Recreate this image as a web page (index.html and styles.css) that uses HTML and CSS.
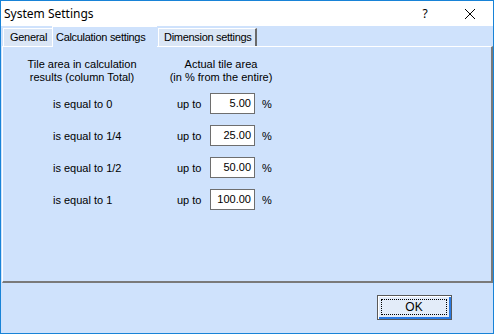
FILE: index.html
```html
<!DOCTYPE html>
<html>
<head>
<meta charset="utf-8">
<link rel="stylesheet" href="styles.css">
</head>
<body>
<div class="window">
  <div class="titlebar">
    <span class="title">System Settings</span>
    <span class="help">?</span>
    <span class="close">
      <svg width="12" height="12" viewBox="0 0 12 12"><path d="M1 1 L11 11 M11 1 L1 11" stroke="#000" stroke-width="1" fill="none"/></svg>
    </span>
  </div>
  <div class="client">
    <div class="tabs">
      <div class="tab tab-general">General</div>
      <div class="tab tab-active">Calculation settings</div>
      <div class="tab tab-dim">Dimension settings</div>
    </div>
    <div class="panel">
      <div class="header">
        <div class="hcol1">Tile area in calculation<br>results (column Total)</div>
        <div class="hcol2">Actual tile area<br>(in % from the entire)</div>
      </div>
      <div class="rows">
        <div class="row"><span class="label">is equal to 0</span><span class="upto">up to</span><span class="input">5.00</span><span class="pct">%</span></div>
        <div class="row"><span class="label">is equal to 1/4</span><span class="upto">up to</span><span class="input">25.00</span><span class="pct">%</span></div>
        <div class="row"><span class="label">is equal to 1/2</span><span class="upto">up to</span><span class="input">50.00</span><span class="pct">%</span></div>
        <div class="row"><span class="label">is equal to 1</span><span class="upto">up to</span><span class="input">100.00</span><span class="pct">%</span></div>
      </div>
    </div>
    <div class="footer">
      <div class="okbtn"><span class="focus">OK</span></div>
    </div>
  </div>
</div>
</body>
</html>
```
FILE: styles.css
```css
html, body {
  margin: 0;
  padding: 0;
  background: #ffffff;
}
.window {
  width: 494px;
  height: 334px;
  box-sizing: border-box;
  border: 1px solid #1883d7;
  display: flex;
  flex-direction: column;
  font-family: "Liberation Sans", Arial, sans-serif;
  font-size: 11px;
  color: #000;
}
.titlebar {
  height: 25px;
  background: #ffffff;
  display: flex;
  align-items: center;
  font-family: "Noto Sans", "Liberation Sans", sans-serif;
  font-size: 12px;
}
.title {
  margin-left: 3px;
  flex: 1;
}
.help {
  width: 14px;
  margin-right: 32px;
  font-size: 12px;
  text-align: center;
}
.close {
  width: 12px;
  height: 12px;
  margin-right: 17px;
  display: flex;
}
.client {
  flex: 1;
  background: #cfe2fc;
  display: flex;
  flex-direction: column;
}
.tabs {
  height: 20px;
  display: flex;
  align-items: flex-end;
  padding-left: 2px;
}
.tab {
  box-sizing: border-box;
  height: 18px;
  line-height: 16px;
  border-top: 1px solid #ffffff;
  border-left: 1px solid #ffffff;
  border-right: 1px solid #6a6a6a;
  padding: 0 5px;
  white-space: nowrap;
  letter-spacing: -0.3px;
  overflow: hidden;
}
.tab-general {
  width: 49px;
  background: #dae6f6;
  border-right: none;
  padding-left: 6px;
}
.tab-active {
  width: 105px;
  height: 21px;
  margin-bottom: -1px;
  border-right: none;
  background: #cfe2fc;
  padding-left: 3px;
  line-height: 20px;
  position: relative;
  z-index: 1;
}
.tab-dim {
  width: 99px;
  margin-left: 1px;
  padding-left: 5px;
  border-right: 2px solid #6a6a6a;
  background: #dae6f6;
}
.panel {
  height: 237px;
  box-sizing: border-box;
  margin: 0 0 0 1px;
  border-top: 1px solid #ffffff;
  border-left: 1px solid #ffffff;
  border-right: 2px solid #7a7a7a;
  border-bottom: 2px solid #7a7a7a;
  display: flex;
  flex-direction: column;
}
.header {
  display: flex;
  padding-left: 14px;
  padding-top: 11px;
  line-height: 13px;
  text-align: center;
}
.hcol1 { width: 130px; }
.hcol2 { width: 148px; }
.rows {
  display: flex;
  flex-direction: column;
  gap: 11px;
  margin-top: 9px;
}
.row {
  height: 21px;
  display: flex;
  align-items: center;
  padding-left: 50px;
}
.label { width: 124px; }
.upto { width: 33px; }
.input {
  box-sizing: border-box;
  width: 45px;
  height: 21px;
  background: #ffffff;
  border: 1px solid #6e6e6e;
  text-align: right;
  padding-right: 3px;
  line-height: 18px;
}
.pct { margin-left: 7px; }
.footer {
  flex: 1;
  display: flex;
  justify-content: flex-end;
  align-items: flex-start;
  padding-top: 12px;
  padding-right: 41px;
}
.okbtn {
  box-sizing: border-box;
  width: 75px;
  height: 25px;
  border: 1px solid #5a5a5a;
  background: #e3ecf9;
  box-shadow: inset 1px 1px 0 #ffffff, inset -2px -2px 0 #2a7ae2;
  padding: 3px 4px 4px 3px;
  display: flex;
}
.focus {
  flex: 1;
  border: 1px dotted #000;
  display: flex;
  align-items: center;
  justify-content: center;
  font-size: 12px;
}
```
